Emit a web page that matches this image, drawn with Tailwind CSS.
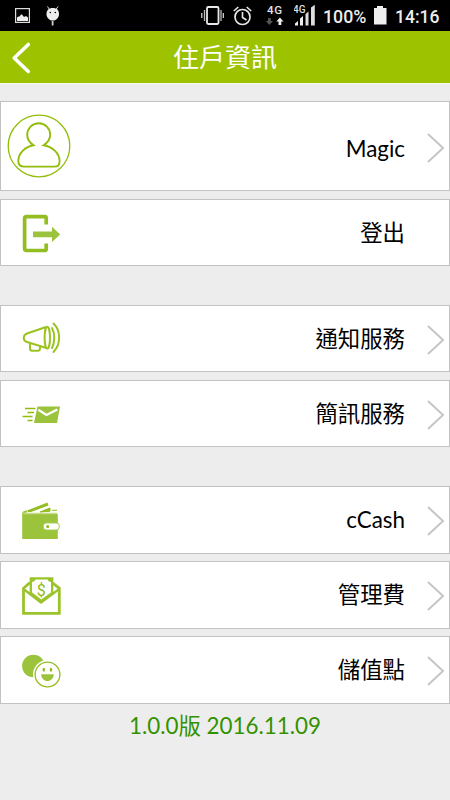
<!DOCTYPE html>
<html lang="zh-Hant">
<head>
<meta charset="utf-8">
<meta name="viewport" content="width=device-width, initial-scale=1">
<title>住戶資訊</title>
<script src="https://cdn.jsdelivr.net/npm/@tailwindcss/browser@4"></script>
</head>
<body class="w-[450px] h-[800px] overflow-hidden bg-[#ededed] font-['Lato','Noto_Sans_CJK_TC',sans-serif] text-black">
<header>
  <!-- Status bar -->
  <div class="h-[31px] bg-black flex items-start text-[#ececec] font-['Roboto',sans-serif]">
    <svg class="ml-[15px] mt-2 shrink-0" width="15" height="15" viewBox="0 0 15 15"><rect x=".6" y=".6" width="13.8" height="13.8" fill="none" stroke="#ddd" stroke-width="1.2"/><path d="M2 13V9.500l1.500-1h1L6 6.500h1l2 2.500 2-1 2 1.500V13z" fill="#eee"/></svg>
    <svg class="ml-4 mt-[6px] shrink-0" width="14" height="20" viewBox="0 0 14 20"><path d="M1.500.5l2 3M12 .5l-2 3" stroke="#ddd" stroke-width="1"/><path d="M.5 8C.5 4 3 2 6.800 2S13 4 13 8s-3 6.600-6.200 6.600S.5 12 .5 8z" fill="#eee"/><circle cx="4.300" cy="6.500" r=".8"/><circle cx="9.300" cy="6.500" r=".8"/><path d="M6.600 15v4.500" stroke="#ccc" stroke-width="1.800"/></svg>
    <svg class="ml-[141px] mt-[6px] shrink-0" width="23" height="19" viewBox="0 0 23 19"><rect x="6" y="1" width="11.500" height="17" rx="1.200" fill="none" stroke="#e8e8e8" stroke-width="1.800"/><path d="M3.500 4v11M20 4v11" stroke="#bbb" stroke-width="1.300"/><path d="M.8 7v5M22.300 7v5" stroke="#ddd" stroke-width="1.200"/></svg>
    <svg class="ml-[9px] mt-[6px] shrink-0" width="19" height="20" viewBox="0 0 19 20"><circle cx="9.500" cy="11" r="7.500" fill="none" stroke="#e8e8e8" stroke-width="1.700"/><path d="M.8 5L5.300 1M18.200 5L13.700 1M9.500 6v5.500l4 2.500" fill="none" stroke="#e8e8e8" stroke-width="1.600"/></svg>
    <svg class="ml-[14px] mt-1 shrink-0" width="22" height="22" viewBox="0 0 22 22"><text x="1" y="10" font-family="Roboto" font-weight="500" font-size="11.500" letter-spacing=".8" fill="#e5e5e5">4G</text><path d="M2 14h2.800v3H7L3.400 21 -.2 17H2z" fill="#555"/><path d="M12.500 21h2.800v-3.500H17.500L13.900 13.600l-3.600 3.900H12.500z" fill="#eee"/></svg>
    <svg class="ml-[6px] mt-1 shrink-0" width="23" height="22" viewBox="0 0 23 22"><text x="-1" y="8.500" font-family="Roboto" font-weight="500" font-size="10" fill="#ddd">4G</text><path d="M1 21.500v-2l3-2.500v4.500zM6 21.500v-7l3-2.500v9.500z" fill="#eee"/><path d="M11.500 21.500V10l3-2.500v14zM17 21.500V3.500L20.800.7v20.800z" fill="#ddd"/></svg>
    <span class="ml-[6px] mt-[5px] w-[47px] text-[17.800px] leading-6 font-medium whitespace-nowrap">100%</span>
    <svg class="ml-[4px] mt-[6px] shrink-0" width="13" height="19" viewBox="0 0 13 19"><path d="M3 0h6v2h3.500v16.500H0V2h3z" fill="#eee"/></svg>
    <span class="ml-[8px] mt-[5px] text-[17.500px] leading-6 font-medium whitespace-nowrap">14:16</span>
  </div>
  <!-- Title bar -->
  <div class="h-[53px] bg-[#9cc200] border-b border-[#f6faea] flex items-center">
    <svg class="w-[50px] h-[52px]" viewBox="0 0 50 52" fill="none" stroke="#fff" stroke-width="3.600" stroke-linecap="round" stroke-linejoin="round"><path d="M28.300 13.500L14.200 27l14.100 13.500"/></svg>
    <h1 class="flex-1 text-center text-[26px] leading-[52px] text-white">住戶資訊</h1>
    <div class="w-[50px]"></div>
  </div>
</header>
<main class="pt-[17px]">
  <section class="flex flex-col gap-2">
    <a class="h-[90px] bg-white border border-[#c2c2c2] flex items-center">
      <svg class="w-20 h-[88px]" viewBox="0 0 80 88" fill="none" stroke="#93bd0b"><circle cx="38" cy="44" r="30.800" stroke-width="1.300"/><path d="M32.500 43.200C28.500 40.500 26.200 37 26.200 32.800a11.500 11.500 0 0 1 23 0c0 4.200-2.300 7.700-6.500 10.400C51 44.500 58.600 51 58.600 59c0 4.500-1.500 5.500-6 5.600H23c-4 0-5.700-1.500-5.700-5.600 0-8 7.200-14.500 15.200-15.800z" stroke-width="1.900"/></svg>
      <span class="flex-1 text-right text-[22.400px] leading-8 pt-[6px]">Magic</span>
      <svg class="w-[44px] h-10 mt-[3px]" viewBox="0 0 44 40" fill="none" stroke="#c5c5c5" stroke-width="2"><path d="M23 6l15 14-15 14"/></svg>
    </a>
    <a class="h-[67px] bg-white border border-[#c2c2c2] flex items-center">
      <svg class="w-20 h-[65px]" viewBox="0 0 80 65"><path d="M45.200 24.500v-6.200c0-1-.6-1.600-1.600-1.600H25.500c-1.200 0-1.900.7-1.900 1.900v30c0 1.200.7 1.900 1.900 1.900h18.100c1 0 1.600-.6 1.600-1.600V43.500" fill="none" stroke="#93bd20" stroke-width="3.700"/><path d="M32 31.600h19v-4.900l8.200 7.800-8.200 7.500v-4.700H32z" fill="#9bc33c"/></svg>
      <span class="flex-1 text-right pr-[44px] text-[22.400px] leading-8">登出</span>
    </a>
  </section>
  <section class="flex flex-col gap-2 mt-[39px]">
    <a class="h-[67px] bg-white border border-[#c2c2c2] flex items-center">
      <svg class="w-20 h-[65px]" viewBox="0 0 80 65" fill="none" stroke="#9bc320" stroke-width="2"><path d="M45 21L26 27.500c-2.500 1-3.200 2-3.200 4.200 0 2.500.7 3.600 3.200 4.300l19.500 6M29 37v5.500c0 1.500.8 2.300 2.200 2.300h5.300c1.600 0 2.500-.8 2.500-2.300V40"/><ellipse cx="46.300" cy="31.700" rx="2.700" ry="10.900"/><path d="M51 22c3 5 3 14 0 20M52.500 17.500c7.500 7 7.500 21 0 28.500" stroke-linecap="round"/></svg>
      <span class="flex-1 text-right text-[22.400px] leading-8 pt-px">通知服務</span>
      <svg class="w-[44px] h-10 mt-[3px]" viewBox="0 0 44 40" fill="none" stroke="#c5c5c5" stroke-width="2"><path d="M23 6l15 14-15 14"/></svg>
    </a>
    <a class="h-[67px] bg-white border border-[#c2c2c2] flex items-center">
      <svg class="w-20 h-[65px]" viewBox="0 0 80 65"><path d="M36.500 25.500H59L56 42H33z" fill="#9bc33c"/><path d="M37.300 28.700L45.500 34l10.800-5.500" fill="none" stroke="#fff" stroke-width="2.300"/><path d="M24 27.500h10.500M26.500 31.500h6.500M21.500 35.500h10M26.500 39.500h5" stroke="#93bd0b" stroke-width="1.400"/></svg>
      <span class="flex-1 text-right text-[22.400px] leading-8 pt-px">簡訊服務</span>
      <svg class="w-[44px] h-10 mt-[3px]" viewBox="0 0 44 40" fill="none" stroke="#c5c5c5" stroke-width="2"><path d="M23 6l15 14-15 14"/></svg>
    </a>
  </section>
  <section class="flex flex-col gap-[7px] mt-[39px]">
    <a class="h-[68px] bg-white border border-[#c2c2c2] flex items-center">
      <svg class="w-20 h-[66px]" viewBox="0 0 80 66"><path d="M21.200 26.500V52h35.600V27z" fill="#9bc33c"/><path d="M22 27.500c0-2 1-3 4-3" stroke="#9bc33c" stroke-width="2" fill="none"/><path d="M26 23.500L46.500 15.500l1 3L30 25h-3z" fill="#93bd20"/><path d="M39 25l10-4v3.200zM51 23.300h5" fill="#93bd20" stroke="#93bd20"/><path d="M22 26.500h34" stroke="#c4dc87" stroke-width="1.300"/><rect x="42.300" y="36" width="16" height="7" rx="3" fill="#fff" stroke="#a9cc55"/><circle cx="46.700" cy="39.500" r="1.500" fill="#8eb912"/></svg>
      <span class="flex-1 text-right text-[22.400px] leading-8">cCash</span>
      <svg class="w-[44px] h-10 mt-[2px]" viewBox="0 0 44 40" fill="none" stroke="#c5c5c5" stroke-width="2"><path d="M23 6l15 14-15 14"/></svg>
    </a>
    <a class="h-[68px] bg-white border border-[#c2c2c2] flex items-center">
      <svg class="w-20 h-[66px]" viewBox="0 0 80 66" fill="none"><path d="M29 20.500l-6.500 5.800V51.300h35.800V26.300L51 20.500" stroke="#9bc32c" stroke-width="2.800"/><path d="M22.500 27L40 40.500 58.300 27" stroke="#9bc32c" stroke-width="2.300"/><path d="M29.800 31V16.300h21.400V31L40.300 39z" fill="#fff" stroke="#9bc32c" stroke-width="2.300"/><path d="M30 16h4.500c0 3-1.500 4-4.500 4zM51 16h-4.500c0 3 1.500 4 4.500 4z" fill="#9bc32c"/><text x="40.300" y="34" text-anchor="middle" font-family="Roboto" font-size="16" fill="#8fba10">$</text></svg>
      <span class="flex-1 text-right text-[22.400px] leading-8">管理費</span>
      <svg class="w-[44px] h-10 mt-[2px]" viewBox="0 0 44 40" fill="none" stroke="#c5c5c5" stroke-width="2"><path d="M23 6l15 14-15 14"/></svg>
    </a>
    <a class="h-[68px] bg-white border border-[#c2c2c2] flex items-center">
      <svg class="w-20 h-[66px]" viewBox="0 0 80 66"><circle cx="32.400" cy="29" r="11.300" fill="#9bc33c"/><circle cx="46.500" cy="37.500" r="14.500" fill="#fff"/><circle cx="46.500" cy="37.500" r="12.400" fill="none" stroke="#93bd20" stroke-width="1.300"/><ellipse cx="42.800" cy="32.700" rx="1.300" ry="2" fill="#93bd20"/><ellipse cx="50" cy="32.700" rx="1.300" ry="2" fill="#93bd20"/><path d="M40.200 37.200h12.500c0 9-12.500 9-12.500 0z" fill="#9bc33c"/></svg>
      <span class="flex-1 text-right text-[22.400px] leading-8">儲值點</span>
      <svg class="w-[44px] h-10 mt-[2px]" viewBox="0 0 44 40" fill="none" stroke="#c5c5c5" stroke-width="2"><path d="M23 6l15 14-15 14"/></svg>
    </a>
  </section>
  <p class="mt-[6px] text-center text-[22.400px] leading-8 text-[#339100]">1.0.0版 2016.11.09</p>
</main>
</body>
</html>
